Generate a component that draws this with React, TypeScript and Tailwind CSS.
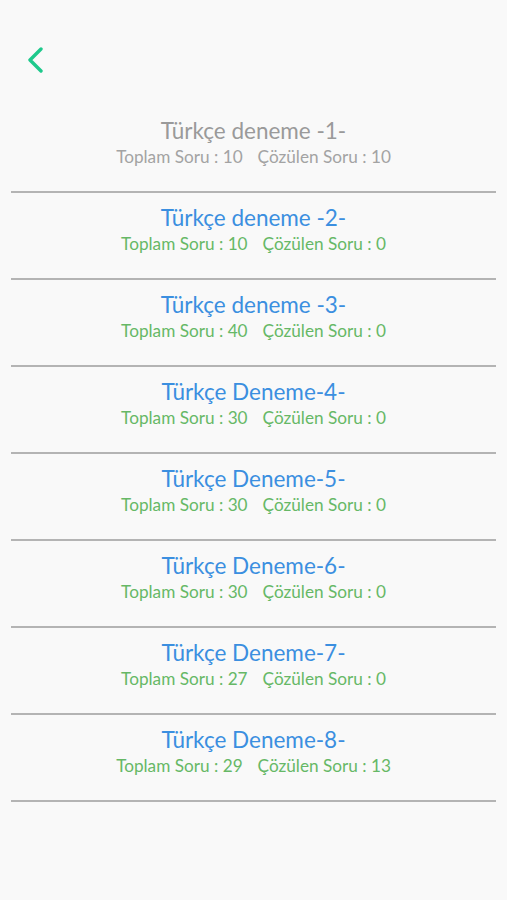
import React from "react";

const items = [
  { t: "Türkçe deneme -1-", total: 10, solved: 10, done: true },
  { t: "Türkçe deneme -2-", total: 10, solved: 0 },
  { t: "Türkçe deneme -3-", total: 40, solved: 0 },
  { t: "Türkçe Deneme-4-", total: 30, solved: 0 },
  { t: "Türkçe Deneme-5-", total: 30, solved: 0 },
  { t: "Türkçe Deneme-6-", total: 30, solved: 0 },
  { t: "Türkçe Deneme-7-", total: 27, solved: 0 },
  { t: "Türkçe Deneme-8-", total: 29, solved: 13 },
];

export default function App() {
  return (
    <div
      className="w-[507px] h-[900px] bg-[#f9f9f9] overflow-hidden"
      style={{ fontFamily: "Lato, 'Noto Sans', sans-serif" }}
    >
      <div className="h-[106px] pl-[27px] pt-[47px]">
        <svg width="18" height="26" viewBox="0 0 18 26" fill="none">
          <path d="M14 2 L3 13 L14 24" stroke="#1ec98c" strokeWidth="3.4" strokeLinecap="round" strokeLinejoin="round" />
        </svg>
      </div>
      <div className="px-[11px]">
        {items.map((it, i) => (
          <div key={i} className="h-[87px] flex flex-col items-center border-b-2 border-[#b4b4b4] pt-[11px]">
            <div className={`text-[22.5px] leading-[27px] ${it.done ? "text-[#9a9a9a]" : "text-[#3b8fe0]"}`}>{it.t}</div>
            <div className={`text-[17.2px] leading-[22px] mt-[2px] flex gap-[15px] ${it.done ? "text-[#a3a3a3]" : "text-[#66b866]"}`}>
              <span>Toplam Soru : {it.total}</span>
              <span>Çözülen Soru : {it.solved}</span>
            </div>
          </div>
        ))}
      </div>
    </div>
  );
}
